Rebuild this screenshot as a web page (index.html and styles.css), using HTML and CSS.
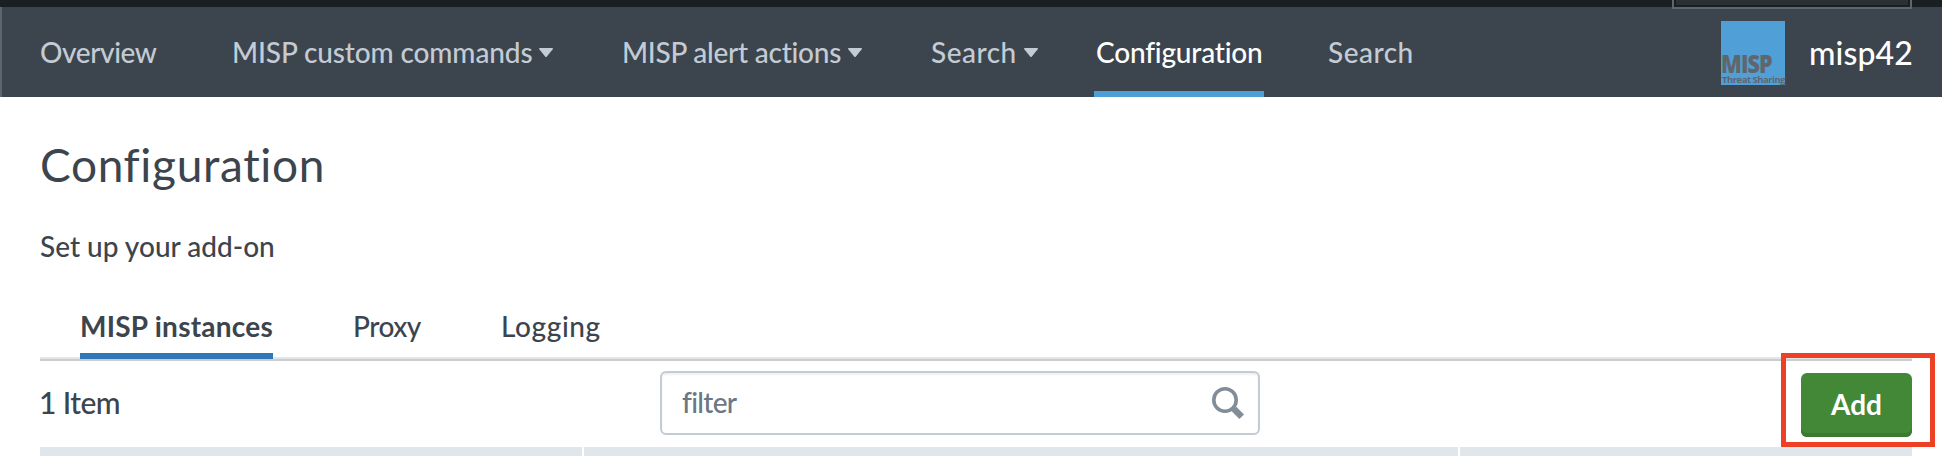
FILE: index.html
```
<!DOCTYPE html>
<html lang="en">
<head>
<meta charset="utf-8">
<title>Configuration</title>
<link rel="stylesheet" href="styles.css">
</head>
<body>
<div class="topbar"><div class="topbar-search"></div></div>
<header class="nav">
  <nav class="nav-links">
    <a class="nav-link overview">Overview</a>
    <a class="nav-link commands">MISP custom commands<svg class="caret" viewBox="0 0 14 9"><path d="M.9 0h12.2q1.3.1.6 1.2L7.9 8.5q-.9 1-1.8 0L.3 1.2Q-.4.1.9 0z"/></svg></a>
    <a class="nav-link alerts">MISP alert actions<svg class="caret" viewBox="0 0 14 9"><path d="M.9 0h12.2q1.3.1.6 1.2L7.9 8.5q-.9 1-1.8 0L.3 1.2Q-.4.1.9 0z"/></svg></a>
    <a class="nav-link search-menu">Search<svg class="caret" viewBox="0 0 14 9"><path d="M.9 0h12.2q1.3.1.6 1.2L7.9 8.5q-.9 1-1.8 0L.3 1.2Q-.4.1.9 0z"/></svg></a>
    <a class="nav-link configuration active">Configuration</a>
    <a class="nav-link search">Search</a>
  </nav>
  <div class="app">
    <div class="logo"><span class="logo-name">MISP</span><span class="logo-sub">Threat Sharing</span></div>
    <span class="app-name">misp42</span>
  </div>
</header>
<main class="page">
  <h1 class="title">Configuration</h1>
  <p class="subtitle">Set up your add-on</p>
  <div class="tabs">
    <a class="tab instances selected">MISP instances</a>
    <a class="tab proxy">Proxy</a>
    <a class="tab logging">Logging</a>
  </div>
  <div class="toolbar">
    <span class="count">1 Item</span>
    <div class="filter">
      <span class="filter-text">filter</span>
      <svg class="glass" viewBox="0 0 32 32"><circle cx="13" cy="13" r="11.2"/><path d="M20.5 20.5l1.6 1.6" class="neck"/><path d="M22 22l7.7 7.7" class="handle"/></svg>
    </div>
    <div class="add-wrap"><button class="add">Add</button><div class="highlight"></div></div>
  </div>
  <div class="table-head"><div></div><div></div><div></div></div>
</main>
</body>
</html>
```

FILE: styles.css
```
* { box-sizing: border-box; }
body {
  margin: 0;
  height: 456px;
  overflow: hidden;
  background: #fff;
  color: #3c444d;
  font: 500 28px/34px Lato, "Open Sans", sans-serif;
  font-variant-ligatures: none;
  white-space: nowrap;
}
.topbar { height: 7px; background: #1a1f22; display: flex; justify-content: flex-end; padding-right: 30px; }
.topbar-search {
  position: relative;
  z-index: 1;
  width: 240px;
  height: 9px;
  border: 2px solid #5c6773;
  border-top: 0;
  background: #2b3033;
  box-shadow: inset 0 -2px #1a1f22, inset 2px 0 #1a1f22, inset -2px 0 #1a1f22;
}
.nav {
  height: 90px;
  padding: 0 30px 0 38px;
  display: flex;
  justify-content: space-between;
  background: #3c444d;
  border-left: 2px solid #5c646c;
}
.nav-links { display: flex; }
.nav-link { height: 90px; padding-top: 28px; color: #c3cbd4; display: flex; }
.overview { width: 192px; letter-spacing: -.4px; }
.commands { width: 390px; letter-spacing: -.12px; }
.alerts { width: 309px; letter-spacing: -.25px; }
.search-menu { width: 163px; letter-spacing: .5px; }
.configuration { width: 170px; padding-left: 2px; letter-spacing: -.2px; }
.search { margin-left: 64px; letter-spacing: .5px; }
.active { color: #fff; border-bottom: 6px solid #4f9fd7; }
.caret { width: 14px; height: 9px; margin: 13px 0 0 7px; fill: #c3cbd4; }
.app { display: flex; }
.logo {
  width: 64px;
  height: 64px;
  margin: 14px 24px 0 0;
  padding-top: 30px;
  display: flex;
  flex-direction: column;
  align-items: flex-start;
  background: #509fd7;
  color: #60666b;
  font-family: "Open Sans", "Noto Sans", sans-serif;
}
.logo-name { font-size: 25px; font-weight: 800; line-height: 24px; letter-spacing: -1px; transform: scaleX(.86); transform-origin: 0 0; }
.logo-sub { font-size: 9.5px; font-weight: 700; line-height: 10px; letter-spacing: -.5px; margin-left: 1px; }
.app-name { width: 103px; padding-top: 27px; color: #fff; font-size: 32px; line-height: 38px; letter-spacing: .1px; }
.page { padding: 0 30px 0 40px; }
.title { margin: 40px 0 0; font-size: 46px; line-height: 56px; font-weight: 400; letter-spacing: .65px; }
.subtitle { margin: 36px 0 0; letter-spacing: 0; }
.tabs { height: 98px; padding: 46px 0 0 40px; display: flex; border-bottom: 2px solid #ccc; box-shadow: inset 0 -2px #e1e6eb; }
.tab { height: 50px; }
.instances { width: 193px; letter-spacing: .25px; margin-right: 80px; }
.selected { font-weight: 700; border-bottom: 6px solid #2f78b7; }
.proxy { width: 148px; letter-spacing: -.5px; }
.logging { letter-spacing: .6px; }
.toolbar { height: 86px; padding-top: 10px; display: flex; }
.count { width: 620px; padding-top: 13px; font-size: 30px; line-height: 36px; letter-spacing: -.6px; text-indent: -1px; }
.filter {
  width: 600px;
  height: 64px;
  border: 2px solid #c3cbd4;
  border-radius: 6px;
  box-shadow: inset 0 2px 2px #eef0f2;
  display: flex;
  justify-content: space-between;
  padding: 12px 14px 0 20px;
}
.filter-text { color: #6b7785; letter-spacing: -.7px; }
.glass { width: 32px; height: 32px; margin-top: 2px; fill: none; stroke: #818d99; stroke-width: 3.6; }
.glass .neck { stroke-width: 4; }
.glass .handle { stroke-width: 6.5; stroke-linecap: butt; }
.add-wrap { position: relative; margin: 2px 0 0 auto; width: 111px; height: 64px; }
.add {
  display: block;
  width: 111px;
  height: 64px;
  padding: 0 0 3px;
  border: 0;
  border-radius: 6px;
  background: #428837;
  box-shadow: inset 0 -4px #3b7a31;
  color: #fff;
  font: 700 28px/34px Lato, sans-serif;
}
.highlight { position: absolute; left: -20px; top: -20px; width: 154px; height: 94px; border: 5px solid #ee4024; }
.table-head { height: 9px; display: grid; grid-template-columns: 542px 874px 1fr; gap: 2px; }
.table-head div { background: #e1e6eb; }
```
